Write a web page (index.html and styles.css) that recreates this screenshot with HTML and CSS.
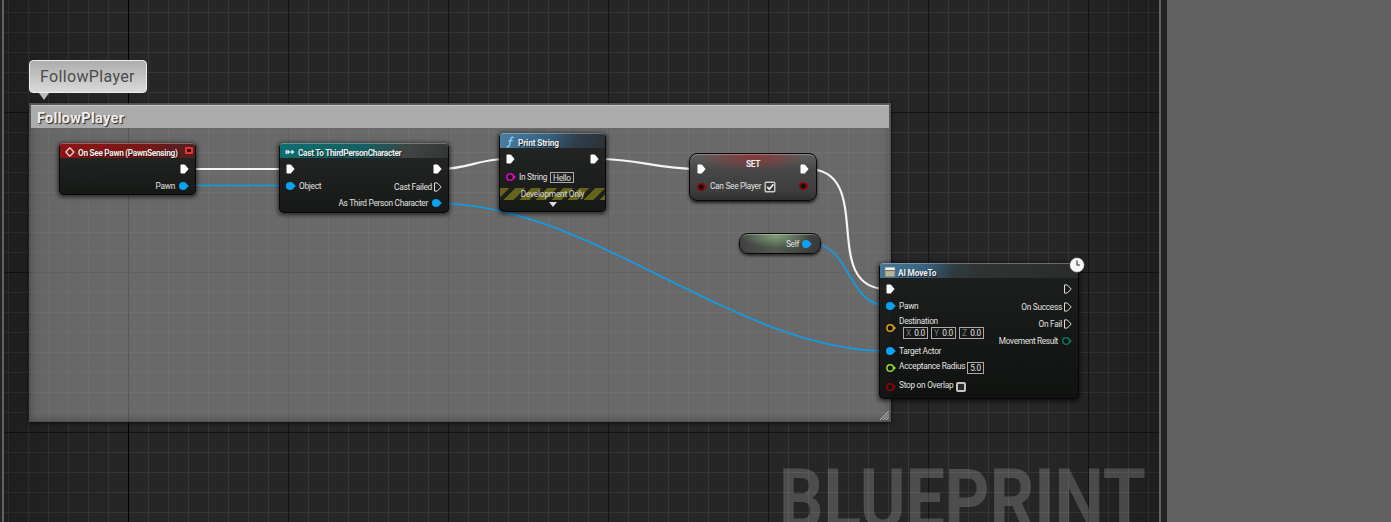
FILE: index.html
```html
<!DOCTYPE html>
<html lang="en">
<head>
<meta charset="utf-8">
<title>Blueprint graph</title>
<link rel="stylesheet" href="styles.css">
</head>
<body>
<svg class="defs" width="0" height="0">
  <symbol id="exec" viewBox="0 0 9 10"><path d="M.5 1.3Q.5.5 1.3.5H4.2Q4.8.5 5.2 1L8.6 5 5.2 9Q4.8 9.5 4.2 9.5H1.3Q.5 9.5.5 8.7Z" fill="#fff"/></symbol>
  <symbol id="exec-open" viewBox="0 0 9 10"><path d="M1.5.9H4.2L8.2 5 4.2 9.1H1.5Z" fill="none" stroke="#ddd" stroke-width="1"/></symbol>
  <symbol id="dot" viewBox="0 0 10 10"><circle cx="4" cy="5" r="4" fill="currentColor"/><path d="M7.2 2.6L9.8 5 7.2 7.4Z" fill="currentColor"/></symbol>
  <symbol id="ring" viewBox="0 0 10 10"><circle cx="4.2" cy="5" r="3.3" fill="#111" stroke="currentColor" stroke-width="1.5"/><path d="M7.7 3L10 5 7.7 7Z" fill="currentColor"/></symbol>
</svg>
<div class="app">
  <main class="graph">
    <div class="watermark">BLUEPRINT</div>

    <section class="comment">
      <h2 class="comment-title">FollowPlayer</h2>
      <svg class="grip" width="9" height="9" viewBox="0 0 9 9"><path d="M0 9L9 0M3 9L9 3M6 9L9 6" stroke="#bbb" stroke-width="1.2" stroke-dasharray="1.2 .5"/></svg>
    </section>
    <div class="bubble">FollowPlayer</div>

    <svg class="wires" width="1157" height="522" viewBox="0 0 1157 522">
      <g transform="translate(-4 0)" fill="none">
        <g stroke="#f4f4f4" stroke-width="2.2">
          <path d="M188 169H287"/>
          <path d="M441 169C468 169 478 159 507 159"/>
          <path d="M598 159C640 159 655 169 698 169"/>
          <path d="M807 169C877 169 818 289 887 289"/>
        </g>
        <g stroke="#0ba0ee" stroke-width="1.6">
          <path d="M188 185.5H287"/>
          <path d="M439 203.5C590 203.5 736 351 887 351"/>
          <path d="M811 243.5C851 243.5 847 305.5 887 305.5"/>
        </g>
      </g>
    </svg>

    <article class="node event">
      <header class="head red"><svg class="ico" width="10" height="10" viewBox="0 0 10 10"><path d="M3.6 2L.9 5 3.6 8M6.1 2L8.9 5 6.1 8M3.6 2L4.8.9 6.1 2M3.6 8L4.8 9.1 6.1 8" fill="none" stroke="#f0dada" stroke-width="1.2"/></svg><span>On See Pawn (PawnSensing)</span><i class="delegate"></i></header>
      <div class="body">
        <div class="col out">
          <div class="pin"><svg class="p"><use href="#exec"/></svg></div>
          <div class="pin"><span>Pawn</span><svg class="p blue"><use href="#dot"/></svg></div>
        </div>
      </div>
    </article>

    <article class="node cast">
      <header class="head teal"><svg class="ico" width="10" height="10" viewBox="0 0 10 10"><path d="M1.2 3V7M1.2 5H3M5 5H7" stroke="#e4f4f4" stroke-width="1.2"/><path d="M2.6 2.6L5.2 5 2.6 7.4ZM6.6 2.6L9.4 5 6.6 7.4Z" fill="#e4f4f4"/></svg><span>Cast To ThirdPersonCharacter</span></header>
      <div class="body">
        <div class="col in">
          <div class="pin"><svg class="p"><use href="#exec"/></svg></div>
          <div class="pin"><svg class="p blue"><use href="#dot"/></svg><span>Object</span></div>
        </div>
        <div class="col out">
          <div class="pin"><svg class="p"><use href="#exec"/></svg></div>
          <div class="pin"><span>Cast Failed</span><svg class="p open"><use href="#exec-open"/></svg></div>
          <div class="pin"><span>As Third Person Character</span><svg class="p blue"><use href="#dot"/></svg></div>
        </div>
      </div>
    </article>

    <article class="node print">
      <header class="head azure"><svg class="ico" width="10" height="12" viewBox="0 0 10 12"><path d="M8.6 1.8C7.2.5 6.1 1.5 5.7 3.4L4.4 9C4 10.8 2.9 11.4 1.6 10.4M3.4 4.6H7.6" fill="none" stroke="#8ccdf5" stroke-width="1.4"/></svg><span class="wide">Print String</span></header>
      <div class="body">
        <div class="col in">
          <div class="pin"><svg class="p"><use href="#exec"/></svg></div>
          <div class="pin"><svg class="p pink"><use href="#ring"/></svg><span>In String</span><b class="field hello">Hello</b></div>
        </div>
        <div class="col out">
          <div class="pin"><svg class="p"><use href="#exec"/></svg></div>
        </div>
      </div>
      <div class="dev">Development Only</div>
      <div class="expand"></div>
    </article>

    <article class="node set">
      <div class="set-title">SET</div>
      <div class="body">
        <div class="col in">
          <div class="pin"><svg class="p"><use href="#exec"/></svg></div>
          <div class="pin"><svg class="p dark"><use href="#ring"/></svg><span class="lift">Can See Player</span><svg class="check" width="12" height="12" viewBox="0 0 12 12"><rect x="1.2" y="1.2" width="9.6" height="9.6" rx="1" fill="#3a3a3a" stroke="#ccc" stroke-width="1.4"/><path d="M3.2 5.8L5.3 8.2 9.4 3.2" fill="none" stroke="#eee" stroke-width="1.7"/></svg></div>
        </div>
        <div class="col out">
          <div class="pin"><svg class="p"><use href="#exec"/></svg></div>
          <div class="pin"><svg class="p dark"><use href="#ring"/></svg></div>
        </div>
      </div>
    </article>

    <article class="node self"><span>Self</span><svg class="p blue"><use href="#dot"/></svg></article>

    <article class="node move">
      <header class="head azure"><svg class="ico" width="10" height="10" viewBox="0 0 10 10"><rect x=".3" y=".5" width="9.4" height="9" fill="#b9b394"/><rect x=".3" y=".5" width="9.4" height="2.6" fill="#eeeede"/><path d="M.3 3.6H9.7" stroke="#555" stroke-width=".8"/></svg><span class="wide">AI MoveTo</span></header>
      <div class="body">
        <div class="col in">
          <div class="pin"><svg class="p"><use href="#exec"/></svg></div>
          <div class="pin"><svg class="p blue"><use href="#dot"/></svg><span>Pawn</span></div>
          <div class="pin"><svg class="p gold"><use href="#ring"/></svg><div class="dest"><span>Destination</span><div class="vec"><b class="field"><i>X</i>0.0</b><b class="field"><i>Y</i>0.0</b><b class="field"><i>Z</i>0.0</b></div></div></div>
          <div class="pin"><svg class="p blue"><use href="#dot"/></svg><span>Target Actor</span></div>
          <div class="pin raised"><svg class="p green"><use href="#ring"/></svg><span>Acceptance Radius</span><b class="field radius">5.0</b></div>
          <div class="pin raised"><svg class="p dark"><use href="#ring"/></svg><span>Stop on Overlap</span><i class="box"></i></div>
        </div>
        <div class="col out">
          <div class="pin"><svg class="p open"><use href="#exec-open"/></svg></div>
          <div class="pin"><span>On Success</span><svg class="p open"><use href="#exec-open"/></svg></div>
          <div class="pin"><span>On Fail</span><svg class="p open"><use href="#exec-open"/></svg></div>
          <div class="pin"><span class="tight">Movement Result</span><svg class="p sea"><use href="#ring"/></svg></div>
        </div>
      </div>
      <svg class="clock" width="16" height="16" viewBox="0 0 16 16"><circle cx="8" cy="8" r="7.4" fill="#f7f7f7" stroke="#222" stroke-width=".6"/><path d="M8 3.5V8H11" fill="none" stroke="#333" stroke-width="1.1"/></svg>
    </article>
  </main>
  <aside class="panel"></aside>
</div>
</body>
</html>
```
FILE: styles.css
```css
* { box-sizing: border-box; }
body { margin: 0; background: #232323; font-family: Roboto, "Liberation Sans", sans-serif; overflow: hidden; }
.defs { position: absolute; }
.app { display: flex; width: 1391px; height: 522px; padding-left: 2px; }
.panel { flex: 1; margin-left: 6px; background: #606060; }

/* Canvas: 20px minor grid, 160px major grid */
.graph {
  position: relative; width: 1159px; height: 522px; overflow: hidden;
  border: solid #626262; border-width: 0 2px;
  background:
    linear-gradient(90deg, rgba(0,0,0,.22), transparent 110px, transparent calc(100% - 110px), rgba(0,0,0,.22)),
    linear-gradient(#000, #000) 124px 0 / 1px 100% no-repeat,
    linear-gradient(90deg, #141414 1px, transparent 1px) 124px 0 / 160px 160px,
    linear-gradient(#141414 1px, transparent 1px) 0 112px / 160px 160px,
    linear-gradient(90deg, #353535 1px, transparent 1px) 4px 0 / 20px 20px,
    linear-gradient(#353535 1px, transparent 1px) 0 12px / 20px 20px,
    #262626;
  background-origin: padding-box;
}
.watermark {
  position: absolute; left: 775px; top: 451px; font-size: 84px; line-height: 98px; font-weight: 700;
  color: rgba(255,255,255,.18); transform: scaleX(.828); transform-origin: 0 0; white-space: nowrap;
}
.wires { position: absolute; left: 0; top: 0; }

.comment {
  position: absolute; left: 25px; top: 103px; width: 862px; height: 319px; padding: 2px 1px;
  background: rgba(160,160,160,.55); border: 1px solid rgba(60,60,60,.5);
  box-shadow: 0 1px 4px rgba(0,0,0,.7), inset 0 0 9px rgba(0,0,0,.3);
}
.comment-title {
  margin: -1px 0 0 0; height: 23px; padding: 0 6px; line-height: 25px; font-size: 14.5px; font-weight: 700;
  letter-spacing: .3px;
  color: #eee; background: #ababab; border-top: 1px solid #c4c4c4; text-shadow: 1px 1px 1px #222;
}
.grip { position: absolute; right: 1px; bottom: 1px; }
.bubble {
  position: absolute; left: 25px; top: 60px; width: 118px; height: 33px; border-radius: 4px;
  border: 1px solid #eee; background: linear-gradient(#adadad, #dadada);
  color: #4b4b4b; font-size: 16px; line-height: 31px; padding-left: 10px; letter-spacing: .35px;
}
.bubble::after { content: ""; position: absolute; left: 9px; top: 32px; border: solid transparent; border-width: 7px 5px 0; border-top-color: #bbb; }

.node {
  position: absolute; border: 1px solid #080808; border-radius: 4px; color: #e2e2e2; font-size: 8.3px; letter-spacing: -.28px;
  background: linear-gradient(rgba(34,37,35,.97), rgba(20,22,20,.97));
  box-shadow: 0 1px 4px 1px rgba(0,0,0,.65); white-space: nowrap;
}
.head {
  display: flex; align-items: center; height: 15px; padding-left: 5px; gap: 3px; margin: -1px 0 0;
  border-radius: 3px 3px 0 0; font-weight: 700; letter-spacing: -.32px; color: #eee; text-shadow: 1px 1px 1px rgba(0,0,0,.7);
  border-top: 1px solid rgba(255,255,255,.3); padding-top: 2px;
}
.head span { padding-top: 1px; }
.wide { letter-spacing: -.15px; }
.tight { letter-spacing: -.35px; }
.ico { flex: none; }
.red { background: linear-gradient(90deg, #8d1414, #7a1717 60%, #4c2222); }
.teal { background: linear-gradient(115deg, #0f6e70, #155e60 50%, #404443 75%, #343635); }
.azure { background: linear-gradient(115deg, #4a80a6, #35607f 45%, #2e3f4c 70%, #2b3136); }
.move .azure { background: linear-gradient(115deg, #4a7797, #3a6380 22%, #2e3b40 38%, #303331 50%, #292c2a); }
.body { display: flex; justify-content: space-between; }
.col { display: grid; align-content: start; }
.pin { display: flex; align-items: center; gap: 3px; min-height: 0; }
.out .pin { justify-content: flex-end; gap: 4px; }
.in { padding-left: 6px; }
.out { padding-right: 6px; }
.p { flex: none; width: 9px; height: 10px; }
.open { margin-left: -3px; }
.blue { color: #0ba2f2; }
.pink { color: #e805c8; }
.dark { color: #930606; }
.gold { color: #e2a413; }
.green { color: #8fe22e; }
.sea { color: #087561; }
.blue, .pink, .dark, .gold, .green, .sea { width: 10px; }
.field { height: 11px; border: 1px solid #aaa; font-weight: 400; line-height: 10px; padding: 0 2px; }

.event { left: 55px; top: 143px; width: 137px; height: 52px; }
.event .body { justify-content: flex-end; }
.event .col { grid-template-rows: 22px 12px; }
.delegate { width: 8px; height: 7px; margin: -3px 2px 0 auto; border: 2px solid #f23030; background: #300; border-radius: 1px; }

.cast { left: 275px; top: 143px; width: 170px; height: 70px; }
.cast .col { grid-template-rows: 22px 14px 18px; }
.cast .in { grid-template-rows: 22px 12px; }

.print { left: 495px; top: 133px; width: 107px; height: 79px; }
.print .col { grid-template-rows: 22px 14px; }
.dev {
  height: 12px; margin-top: 4px; text-align: center; line-height: 13px; color: #d8d8d8; letter-spacing: -.2px;
  background: repeating-linear-gradient(135deg, #66631a 0 6.3px, #1f211b 6.8px 10.9px, #66631a 11.3px);
}
.expand { width: 0; margin: 2px auto; border: solid transparent; border-width: 5px 4px 0; border-top-color: #ddd; }

.set {
  left: 685px; top: 153px; width: 128px; height: 48px; border-radius: 8px; display: grid;
  background: radial-gradient(ellipse 55px 18px at 50% 0, rgba(150,45,45,.8), transparent), linear-gradient(#606060, #464646 35%, #3e3e3e 80%, #2e2e2e);
  box-shadow: 0 2px 3px rgba(0,0,0,.7), inset 0 1px 0 rgba(255,255,255,.25);
}
.set-title { grid-area: 1 / 1; text-align: center; font-weight: 700; line-height: 20px; color: #eee; }
.set .body { grid-area: 1 / 1; padding: 9px 1px 0; }
.set .col { grid-template-rows: 12px 24px; }
.set .out { grid-template-rows: 12px 21px; }
.lift { padding-bottom: 2px; }

.self {
  left: 735px; top: 233px; width: 82px; height: 21px; border-radius: 9px; display: flex;
  align-items: center; justify-content: flex-end; gap: 3px; padding-right: 8px;
  background: radial-gradient(ellipse 36px 12px at 45% 10%, rgba(140,175,130,.8), transparent), linear-gradient(90deg, #404040, #4f5a4d 45%, #383838);
  box-shadow: 0 2px 3px rgba(0,0,0,.6), inset 0 1px 0 rgba(255,255,255,.3);
}

.move { left: 875px; top: 263px; width: 200px; height: 136px; background: linear-gradient(rgba(28,31,29,.96), rgba(14,17,14,.94)); }
.move .in { grid-template-rows: 22px 11px 34px 12px 22px 16px; }
.move .out { grid-template-rows: 22px 14px 20px 14px; }
.dest { display: flex; flex-direction: column; gap: 1px; margin-top: -1px; line-height: 9px; }
.vec { display: flex; gap: 3px; padding-left: 4px; }
.vec .field { width: 25px; height: 12px; display: flex; justify-content: space-between; line-height: 11px; }
.vec i { font-style: normal; color: #777; }
.raised span { padding-bottom: 4px; }
.radius { height: 12px; line-height: 11px; margin-left: -1px; }
.box { width: 10px; height: 10px; border: 2px solid #c4c4c4; border-radius: 2px; background: #2b2b2b; }
.clock { position: absolute; right: -7px; top: -7px; }
```
